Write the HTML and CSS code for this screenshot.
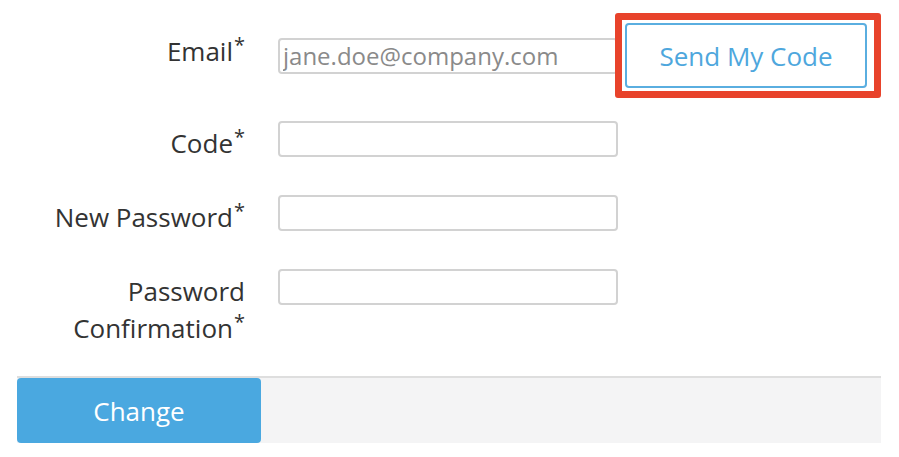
FILE: index.html
```html
<!DOCTYPE html>
<html lang="en">
<head>
    <meta charset="UTF-8">
    <meta name="viewport" content="width=device-width, initial-scale=1.0">
    <title>Change Password</title>
    <link rel="stylesheet" href="styles.css">
</head>
<body>

<form class="reset-form">
    <div class="form-row email-row">
        <label class="field-label" for="email">Email<span class="req">*</span></label>
        <input class="field-input" type="email" id="email" placeholder="jane.doe@company.com">
        <span class="highlight">
            <button class="send-btn" type="button">Send My Code</button>
        </span>
    </div>

    <div class="form-row">
        <label class="field-label" for="code">Code<span class="req">*</span></label>
        <input class="field-input" type="text" id="code">
    </div>

    <div class="form-row">
        <label class="field-label" for="new-pass">New Password<span class="req">*</span></label>
        <input class="field-input" type="password" id="new-pass">
    </div>

    <div class="form-row">
        <label class="field-label" for="confirm-pass">Password Confirmation<span class="req">*</span></label>
        <input class="field-input" type="password" id="confirm-pass">
    </div>

    <div class="form-footer">
        <button class="change-btn" type="submit">Change</button>
    </div>
</form>

</body>
</html>
```

FILE: styles.css
```css
body {
    font-family: "Open Sans", "Liberation Sans", sans-serif;
    margin: 0;
    padding: 23px 18px 0 17px;
    background: #fff;
    color: #333;
}
.reset-form {
    display: flex;
    flex-direction: column;
    gap: 33px;
}
.form-row {
    display: grid;
    grid-template-columns: 228px 340px auto;
    column-gap: 33px;
    align-items: start;
}
.form-row .field-input {
    grid-column: 2;
}
.email-row {
    column-gap: 0;
    grid-template-columns: 228px 33px 340px auto;
    align-items: center;
}
.email-row .field-label {
    grid-column: 1;
    align-self: start;
    padding-top: 10px;
}
.email-row .field-input {
    grid-column: 3;
}
.field-label {
    font-size: 26px;
    line-height: 37px;
    padding-top: 4px;
    text-align: right;
    color: #333;
}
.req {
    font-size: 20px;
    line-height: 0;
    position: relative;
    top: -9px;
    margin-left: 1px;
}
.field-input {
    box-sizing: border-box;
    width: 340px;
    height: 36px;
    margin: 0;
    padding: 0 3px;
    border: 2px solid #d2d2d2;
    border-radius: 4px;
    font-family: inherit;
    font-size: 24px;
    color: #333;
    background: #fff;
}
.field-input::placeholder {
    color: #8a8a8a;
}
/* review highlight drawn round the button, laid over the input edge */
.highlight {
    grid-column: 4;
    display: flex;
    margin: -10px 0 -10px -3px;
    padding: 3px;
    border: 7px solid #e8432b;
    border-radius: 3px;
    background: #fff;
}
.send-btn {
    box-sizing: border-box;
    width: 242px;
    height: 65px;
    border: 2px solid #5aaee0;
    border-radius: 4px;
    background: #fff;
    color: #4ea7dd;
    font-family: inherit;
    font-size: 26px;
}
.form-footer {
    margin-top: -4px;
    background: #f4f4f5;
    border-top: 2px solid #dedede;
    height: 65px;
}
.change-btn {
    width: 244px;
    height: 65px;
    border: none;
    border-radius: 4px;
    background: #4aa8e0;
    color: #fff;
    font-family: inherit;
    font-size: 26px;
}
```
